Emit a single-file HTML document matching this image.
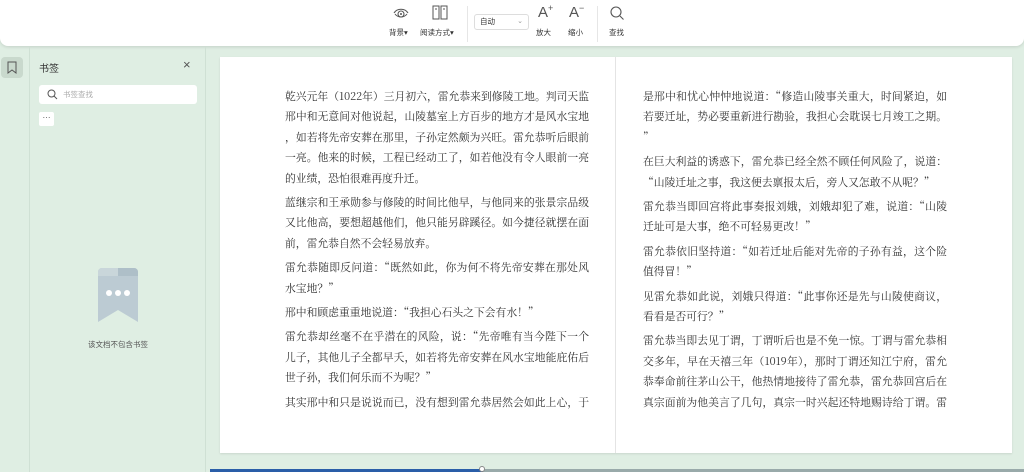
<!DOCTYPE html>
<html><head><meta charset="utf-8"><style>
*{margin:0;padding:0;box-sizing:border-box}
body{width:1024px;height:472px;overflow:hidden;background:#dfeee3;font-family:"Liberation Sans","Noto Sans CJK SC",sans-serif;position:relative}
.top{position:absolute;left:0;top:0;width:1024px;height:46px;background:#fff;border-radius:0 0 8px 8px;box-shadow:0 1px 3px rgba(0,0,0,.12)}
.tb{position:absolute;font-size:7.5px;color:#333;text-align:center}
.sep{position:absolute;top:6px;width:1px;height:36px;background:#e6e6e6}
.strip{position:absolute;left:0;top:47px;width:30px;height:425px;border-right:1px solid #cfe0d4}
.panel{position:absolute;left:30px;top:47px;width:176px;height:425px;border-right:1px solid #cfe0d4}
.page{position:absolute;left:220px;top:57px;width:792px;height:396px;background:#fff;box-shadow:0 1px 2px rgba(0,0,0,.1)}
.col{position:absolute;top:30px;width:304px;font-family:"Noto Serif CJK SC","Liberation Serif",serif;font-size:10.8px;line-height:20.4px;color:#333}
.col p{margin-bottom:4px}
.col .f{display:block;text-align:justify;text-align-last:justify;white-space:nowrap}
.col .l{display:block;white-space:nowrap}
</style></head><body>
<div class="top">
 <svg style="position:absolute;left:393px;top:6px" width="16" height="14" viewBox="0 0 16 14"><path d="M1 7C4 2 12 2 15 7" fill="none" stroke="#555" stroke-width="1.1"/><path d="M2 8C5 12 11 12 14 8" fill="none" stroke="#555" stroke-width="1"/><circle cx="8" cy="8" r="3" fill="none" stroke="#555" stroke-width="1.1"/><circle cx="8" cy="8" r="1" fill="#555"/></svg>
 <div class="tb" style="left:389px;top:27px">背景▾</div>
 <svg style="position:absolute;left:432px;top:5px" width="16" height="15" viewBox="0 0 16 15"><rect x="1" y="1" width="6" height="13" fill="none" stroke="#555"/><rect x="9" y="1" width="6" height="13" fill="none" stroke="#555"/><path d="M3 4h2M11 4h2" stroke="#555"/></svg>
 <div class="tb" style="left:420px;top:27px">阅读方式▾</div>
 <div class="sep" style="left:467px"></div>
 <div style="position:absolute;left:474px;top:14px;width:55px;height:16px;border:1px solid #ddd;border-radius:3px;font-size:7.5px;line-height:14px;padding-left:5px;color:#333">自动<span style="position:absolute;right:5px;color:#999;font-size:7px">⌄</span></div>
 <div style="position:absolute;left:538px;top:3px;font-size:15px;color:#555">A<sup style="font-size:9px;vertical-align:6px">+</sup></div>
 <div class="tb" style="left:536px;top:27px">放大</div>
 <div style="position:absolute;left:569px;top:3px;font-size:15px;color:#555">A<sup style="font-size:9px;vertical-align:6px">−</sup></div>
 <div class="tb" style="left:568px;top:27px">缩小</div>
 <div class="sep" style="left:597px"></div>
 <svg style="position:absolute;left:609px;top:5px" width="16" height="16" viewBox="0 0 16 16"><circle cx="7" cy="7" r="5" fill="none" stroke="#555" stroke-width="1.1"/><path d="M11 11l3.5 3.5" stroke="#555" stroke-width="1.1"/></svg>
 <div class="tb" style="left:609px;top:27px">查找</div>
</div>
<div class="strip"><div style="position:absolute;left:1px;top:10px;width:22px;height:21px;background:#c9d9cd;border-radius:4px"></div>
<svg style="position:absolute;left:7px;top:14px" width="10" height="13" viewBox="0 0 10 13"><path d="M1 1h8v11L5 9 1 12z" fill="none" stroke="#555" stroke-width="1"/></svg></div>
<div class="panel">
 <div style="position:absolute;left:9px;top:13px;font-size:10px;color:#333">书签</div>
 <div style="position:absolute;left:153px;top:10px;font-size:13px;color:#555">×</div>
 <div style="position:absolute;left:9px;top:38px;width:158px;height:19px;background:#fff;border-radius:3px;font-size:7.5px;color:#aaa;line-height:19px;padding-left:24px">书签查找
 <svg style="position:absolute;left:8px;top:4px" width="11" height="11" viewBox="0 0 11 11"><circle cx="4.5" cy="4.5" r="3.5" fill="none" stroke="#555"/><path d="M7 7l3 3" stroke="#555"/></svg></div>
 <div style="position:absolute;left:9px;top:65px;width:15px;height:14px;background:#fff;border-radius:2px;font-size:8px;text-align:center;line-height:11px;color:#444">···</div>
 <svg style="position:absolute;left:66px;top:221px" width="44" height="54" viewBox="0 0 44 54"><path d="M2 4a4 4 0 0 1 4-4h32a4 4 0 0 1 4 4v50L22 42 2 54z" fill="#bccbd3"/><path d="M22 0h16a4 4 0 0 1 4 4v4H22z" fill="#aebfc8"/><path d="M6 0h16v8H2V4a4 4 0 0 1 4-4z" fill="#c9d6da"/><circle cx="13" cy="25" r="3" fill="#fff"/><circle cx="22" cy="25" r="3" fill="#fff"/><circle cx="31" cy="25" r="3" fill="#fff"/></svg>
 <div style="position:absolute;left:0;width:176px;top:292px;text-align:center;font-size:7.5px;color:#555">该文档不包含书签</div>
</div>
<div class="page">
 <div style="position:absolute;left:395px;top:0;width:1px;height:396px;background:#e4e4e4"></div>
 <div class="col" style="left:65px">
 <p><span class="f">乾兴元年（1022年）三月初六，雷允恭来到修陵工地。判司天监</span><span class="f">邢中和无意间对他说起，山陵墓室上方百步的地方才是风水宝地</span><span class="f">，如若将先帝安葬在那里，子孙定然颇为兴旺。雷允恭听后眼前</span><span class="f">一亮。他来的时候，工程已经动工了，如若他没有令人眼前一亮</span><span class="l">的业绩，恐怕很难再度升迁。</span></p>
 <p><span class="f">蓝继宗和王承勋参与修陵的时间比他早，与他同来的张景宗品级</span><span class="f">又比他高，要想超越他们，他只能另辟蹊径。如今捷径就摆在面</span><span class="l">前，雷允恭自然不会轻易放弃。</span></p>
 <p><span class="f">雷允恭随即反问道：“既然如此，你为何不将先帝安葬在那处风</span><span class="l">水宝地？”</span></p>
 <p><span class="l">邢中和顾虑重重地说道：“我担心石头之下会有水！”</span></p>
 <p><span class="f">雷允恭却丝毫不在乎潜在的风险，说：“先帝唯有当今陛下一个</span><span class="f">儿子，其他儿子全都早夭，如若将先帝安葬在风水宝地能庇佑后</span><span class="l">世子孙，我们何乐而不为呢？”</span></p>
 <p><span class="f">其实邢中和只是说说而已，没有想到雷允恭居然会如此上心，于</span></p>
 </div>
 <div class="col" style="left:423px">
 <p><span class="f">是邢中和忧心忡忡地说道：“修造山陵事关重大，时间紧迫，如</span><span class="f">若要迁址，势必要重新进行勘验，我担心会耽误七月竣工之期。</span><span class="l">”</span></p>
 <p><span class="f">在巨大利益的诱惑下，雷允恭已经全然不顾任何风险了，说道：</span><span class="l">“山陵迁址之事，我这便去禀报太后，旁人又怎敢不从呢？”</span></p>
 <p><span class="f">雷允恭当即回宫将此事奏报刘娥，刘娥却犯了难，说道：“山陵</span><span class="l">迁址可是大事，绝不可轻易更改！”</span></p>
 <p><span class="f">雷允恭依旧坚持道：“如若迁址后能对先帝的子孙有益，这个险</span><span class="l">值得冒！”</span></p>
 <p><span class="f">见雷允恭如此说，刘娥只得道：“此事你还是先与山陵使商议，</span><span class="l">看看是否可行？”</span></p>
 <p><span class="f">雷允恭当即去见丁谓，丁谓听后也是不免一惊。丁谓与雷允恭相</span><span class="f">交多年，早在天禧三年（1019年），那时丁谓还知江宁府，雷允</span><span class="f">恭奉命前往茅山公干，他热情地接待了雷允恭，雷允恭回宫后在</span><span class="f">真宗面前为他美言了几句，真宗一时兴起还特地赐诗给丁谓。雷</span></p>
 </div>
</div>
<div style="position:absolute;left:210px;top:469px;width:273px;height:3px;background:#2a5ea8"></div>
<div style="position:absolute;left:483px;top:469px;width:541px;height:3px;background:#9aa"></div>
<div style="position:absolute;left:479px;top:466px;width:6px;height:6px;border-radius:50%;background:#fff;border:1px solid #888"></div>
</body></html>
